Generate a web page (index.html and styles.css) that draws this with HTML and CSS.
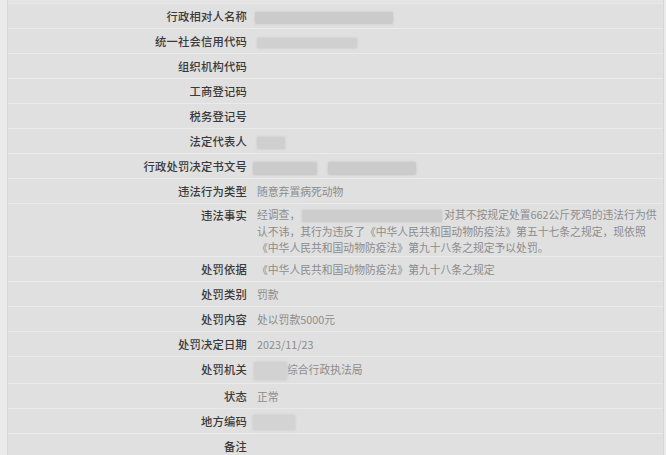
FILE: index.html
```html
<!DOCTYPE html>
<html lang="zh-CN">

<head>
    <meta charset="UTF-8">
    <meta name="viewport" content="width=device-width, initial-scale=1.0">
    <title>行政处罚信息</title>
    <link rel="stylesheet" href="styles.css">
</head>

<body>
    <div class="panel">
        <table class="detail">
            <tr class="top"><td class="label"></td><td class="value"></td></tr>
            <tr>
                <td class="label">行政相对人名称</td>
                <td class="value"><span class="mask mask-name"></span></td>
            </tr>
            <tr>
                <td class="label">统一社会信用代码</td>
                <td class="value"><span class="mask mask-code"></span></td>
            </tr>
            <tr>
                <td class="label">组织机构代码</td>
                <td class="value"></td>
            </tr>
            <tr>
                <td class="label">工商登记码</td>
                <td class="value"></td>
            </tr>
            <tr>
                <td class="label">税务登记号</td>
                <td class="value"></td>
            </tr>
            <tr>
                <td class="label">法定代表人</td>
                <td class="value"><span class="mask mask-person"></span></td>
            </tr>
            <tr>
                <td class="label">行政处罚决定书文号</td>
                <td class="value"><span class="mask mask-doc1"></span><span class="mask mask-doc2"></span></td>
            </tr>
            <tr>
                <td class="label">违法行为类型</td>
                <td class="value">随意弃置病死动物</td>
            </tr>
            <tr class="multi">
                <td class="label">违法事实</td>
                <td class="value">经调查，<span class="mask mask-fact"></span>对其不按规定处置662公斤死鸡的违法行为供<br>认不讳，其行为违反了《中华人民共和国动物防疫法》第五十七条之规定，现依照<br>《中华人民共和国动物防疫法》第九十八条之规定予以处罚。</td>
            </tr>
            <tr>
                <td class="label">处罚依据</td>
                <td class="value">《中华人民共和国动物防疫法》第九十八条之规定</td>
            </tr>
            <tr>
                <td class="label">处罚类别</td>
                <td class="value">罚款</td>
            </tr>
            <tr>
                <td class="label">处罚内容</td>
                <td class="value">处以罚款5000元</td>
            </tr>
            <tr>
                <td class="label">处罚决定日期</td>
                <td class="value">2023/11/23</td>
            </tr>
            <tr>
                <td class="label">处罚机关</td>
                <td class="value"><span class="mask mask-org"></span>综合行政执法局</td>
            </tr>
            <tr>
                <td class="label">状态</td>
                <td class="value">正常</td>
            </tr>
            <tr>
                <td class="label">地方编码</td>
                <td class="value"><span class="mask mask-area"></span></td>
            </tr>
            <tr>
                <td class="label">备注</td>
                <td class="value"></td>
            </tr>
        </table>
    </div>
</body>

</html>
```

FILE: styles.css
```css
body {
    margin: 0;
    padding: 0;
    background-color: #ebebeb;
    font-family: "Noto Sans CJK SC", "Noto Sans", sans-serif;
    font-size: 11px;
    height: 455px;
    overflow: hidden;
}

.panel {
    margin-left: 7px;
    margin-right: 2px;
    border-left: 1px solid #d6d6d6;
    border-right: 1px solid #d6d6d6;
    background-color: #e0e0e0;
    height: 100%;
}

.detail {
    width: 100%;
    border-collapse: collapse;
}

.detail td {
    padding: 4px 0 3px;
    line-height: 17px;
    border-bottom: 1px solid #eaeaea;
    vertical-align: top;
}

.detail tr.top td {
    padding: 0;
    height: 3px;
    line-height: 3px;
    background-color: #e4e4e4;
}

.detail .label {
    width: 239px;
    padding-right: 3px;
    text-align: right;
    color: #3a3a3a;
    font-size: 11.3px;
    font-weight: 500;
    letter-spacing: 0.2px;
    white-space: nowrap;
}

.detail .value {
    padding-left: 7px;
    color: #8c8c8c;
    font-size: 10.8px;
    white-space: nowrap;
}

.detail tr.multi td {
    padding: 1px 0 0;
}

.detail tr.multi .label {
    padding: 3px 3px 0 0;
}

.detail tr.multi .value {
    padding: 2px 0 0 7px;
    line-height: 16.5px;
}

.mask {
    display: inline-block;
    vertical-align: middle;
    background-color: #cbcbcb;
    border-radius: 2px;
    box-shadow: 0 0 2px 1px #d4d4d4;
    filter: blur(0.6px);
}

.mask-name {
    width: 138px;
    height: 12px;
    margin-left: -2px;
}

.mask-code {
    width: 100px;
    height: 10px;
    background-color: #d0d0d0;
}

.mask-person {
    width: 28px;
    height: 12px;
    background-color: #cfcfcf;
}

.mask-doc1 {
    width: 64px;
    height: 13px;
    margin-left: -4px;
}

.mask-doc2 {
    width: 88px;
    height: 13px;
    margin-left: 11px;
}

.mask-fact {
    width: 140px;
    height: 12px;
    margin: 0 2px;
    background-color: #cdcdcd;
}

.mask-org {
    width: 33px;
    height: 18px;
    margin-left: -3px;
    background-color: #d2d2d2;
}

.mask-area {
    width: 42px;
    height: 15px;
    margin-left: -4px;
    background-color: #d3d3d3;
}
```
